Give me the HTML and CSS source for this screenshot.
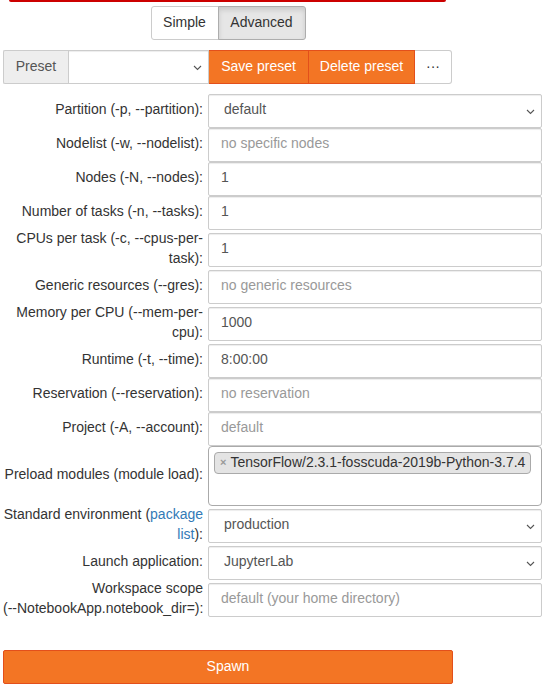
FILE: index.html
```html
<!DOCTYPE html>
<html lang="en">
<head>
<meta charset="utf-8">
<title>Spawner options</title>
<link rel="stylesheet" href="styles.css">
</head>
<body>
<div class="alert-edge"></div>
<div class="page">
  <div class="mode-wrap">
    <div class="mode">
      <button class="mode-btn">Simple</button>
      <button class="mode-btn active">Advanced</button>
    </div>
  </div>

  <div class="preset-row">
    <span class="addon">Preset</span>
    <div class="sel preset-sel">
      <select class="sel-native"><option></option></select>
      <svg class="chev" width="9" height="6" viewBox="0 0 9 6"><path d="M1 1l3.5 3.5L8 1" fill="none" stroke="#555" stroke-width="1.1"/></svg>
    </div>
    <button class="obtn save">Save preset</button>
    <button class="obtn del">Delete preset</button>
    <button class="dots">···</button>
  </div>

  <div class="form">
    <div class="row">
      <label class="lbl">Partition (-p, --partition):</label>
      <div class="sel">
        <select class="sel-native ctl"><option>default</option></select>
        <svg class="chev" width="9" height="6" viewBox="0 0 9 6"><path d="M1 1l3.5 3.5L8 1" fill="none" stroke="#555" stroke-width="1.1"/></svg>
      </div>
    </div>
    <div class="row">
      <label class="lbl">Nodelist (-w, --nodelist):</label>
      <input class="ctl" placeholder="no specific nodes">
    </div>
    <div class="row">
      <label class="lbl">Nodes (-N, --nodes):</label>
      <input class="ctl" value="1">
    </div>
    <div class="row">
      <label class="lbl">Number of tasks (-n, --tasks):</label>
      <input class="ctl" value="1">
    </div>
    <div class="row">
      <label class="lbl">CPUs per task (-c, --cpus-per-task):</label>
      <input class="ctl" value="1">
    </div>
    <div class="row">
      <label class="lbl">Generic resources (--gres):</label>
      <input class="ctl" placeholder="no generic resources">
    </div>
    <div class="row">
      <label class="lbl">Memory per CPU (--mem-per-cpu):</label>
      <input class="ctl" value="1000">
    </div>
    <div class="row">
      <label class="lbl">Runtime (-t, --time):</label>
      <input class="ctl" value="8:00:00">
    </div>
    <div class="row">
      <label class="lbl">Reservation (--reservation):</label>
      <input class="ctl" placeholder="no reservation">
    </div>
    <div class="row">
      <label class="lbl">Project (-A, --account):</label>
      <input class="ctl" placeholder="default">
    </div>
    <div class="row">
      <label class="lbl">Preload modules (module load):</label>
      <div class="multi">
        <span class="chip"><span class="chip-x">×</span>TensorFlow/2.3.1-fosscuda-2019b-Python-3.7.4</span>
      </div>
    </div>
    <div class="row">
      <label class="lbl">Standard environment (<a href="#" class="link">package list</a>):</label>
      <div class="sel">
        <select class="sel-native ctl"><option>production</option></select>
        <svg class="chev" width="9" height="6" viewBox="0 0 9 6"><path d="M1 1l3.5 3.5L8 1" fill="none" stroke="#555" stroke-width="1.1"/></svg>
      </div>
    </div>
    <div class="row">
      <label class="lbl">Launch application:</label>
      <div class="sel">
        <select class="sel-native ctl"><option>JupyterLab</option></select>
        <svg class="chev" width="9" height="6" viewBox="0 0 9 6"><path d="M1 1l3.5 3.5L8 1" fill="none" stroke="#555" stroke-width="1.1"/></svg>
      </div>
    </div>
    <div class="row">
      <label class="lbl">Workspace scope <span class="nowrap">(--NotebookApp.notebook_dir=):</span></label>
      <input class="ctl" placeholder="default (your home directory)">
    </div>
  </div>

  <button class="spawn">Spawn</button>
</div>
</body>
</html>
```

FILE: styles.css
```css
* { box-sizing: border-box; }
html, body { margin: 0; padding: 0; background: #fff; }
body {
  font-family: "Liberation Sans", Arial, sans-serif;
  font-size: 14px;
  line-height: 20px;
  color: #333;
}
.alert-edge {
  height: 2px;
  margin: 0 103px 0 9px;
  background: #c00;
  border-radius: 0 0 3px 3px;
}
.page { padding: 4px 0 0 3px; }

.mode-wrap { width: 450px; display: flex; justify-content: center; }
.mode { display: flex; }
.mode-btn {
  font: inherit;
  color: #333;
  height: 34px;
  padding: 0 0 3px;
  background: #fff;
  border: 1px solid #ccc;
  cursor: pointer;
}
.mode-btn:first-child { border-radius: 3px 0 0 3px; width: 68px; }
.mode-btn.active {
  width: 88px;
  margin-left: -1px;
  background: #e6e6e6;
  border-color: #adadad;
  border-radius: 0 3px 3px 0;
  box-shadow: inset 0 3px 5px rgba(0,0,0,0.125);
}

.preset-row { display: flex; margin-top: 10px; width: 450px; height: 34px; }
.addon {
  width: 65px;
  flex: none;
  display: flex; align-items: center; justify-content: center;
  padding-bottom: 3px;
  background: #eee;
  border: 1px solid #ccc;
  border-right: 0;
  color: #555;
  border-radius: 2px 0 0 2px;
}
.sel { position: relative; }
.preset-sel { width: 141px; flex: none; }
.sel-native {
  appearance: none;
  -webkit-appearance: none;
  width: 100%;
  height: 34px;
  font: inherit;
  color: #555;
  background: #fff;
  border: 1px solid #ccc;
  padding: 0 24px 3px 15px;
  box-shadow: inset 0 1px 1px rgba(0,0,0,0.075);
}
.preset-sel .sel-native { border-radius: 0; }
.chev { position: absolute; right: 7px; top: 15px; pointer-events: none; }
.obtn {
  flex: none;
  font: inherit;
  color: #fff;
  white-space: nowrap;
  background: #f37524;
  border: 1px solid #e34f1b;
  margin-left: -1px;
  padding: 0 0 3px;
  cursor: pointer;
}
.obtn.save { width: 101px; }
.obtn.del { width: 107px; }
.dots {
  flex: none;
  font: inherit;
  color: #333;
  background: #fff;
  border: 1px solid #ccc;
  border-left: 0;
  width: 37px;
  padding: 0 0 3px;
  border-radius: 0 3px 3px 0;
  cursor: pointer;
}

.form { margin-top: 10px; }
.row {
  display: grid;
  grid-template-columns: 200px 334px;
  column-gap: 5px;
  align-items: center;
  min-height: 34px;
}
.lbl { text-align: right; margin: -2px 0 2px; }
.nowrap { white-space: nowrap; }
.link { color: #337ab7; text-decoration: none; }
.ctl {
  width: 100%;
  height: 34px;
  font: inherit;
  color: #555;
  padding: 0 12px 4px;
  background: #fff;
  border: 1px solid #ccc;
  border-radius: 2px;
  box-shadow: inset 0 1px 1px rgba(0,0,0,0.075);
}
select.ctl { padding-left: 15px; padding-bottom: 4px; }
.ctl::placeholder { color: #999; }

.multi {
  height: 60px;
  border: 1px solid #aaa;
  border-radius: 4px;
  padding: 4px 5px;
  background: #fff;
}
.chip {
  display: inline-flex;
  align-items: center;
  height: 22px;
  padding: 0 5px 2px;
  background: #e4e4e4;
  border: 1px solid #aaa;
  border-radius: 4px;
  color: #333;
  font-size: 14px;
}
.chip-x { color: #999; font-weight: bold; font-size: 11px; margin-right: 4px; }

.spawn {
  display: block;
  margin-top: 30px;
  width: 450px;
  height: 34px;
  font: inherit;
  color: #fff;
  background: #f37524;
  border: 1px solid #e34f1b;
  border-radius: 2px;
  padding: 0 0 2px;
  cursor: pointer;
}
```
